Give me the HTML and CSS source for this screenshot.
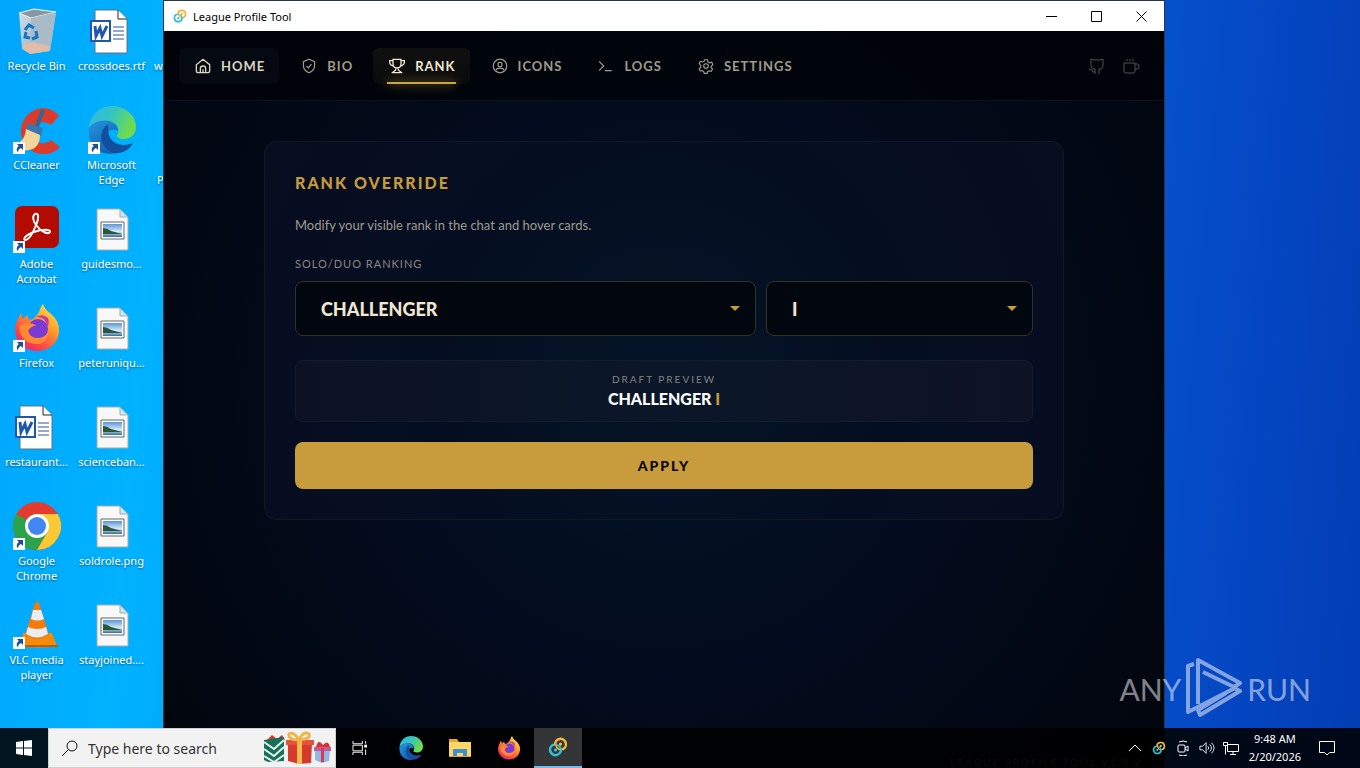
FILE: index.html
```
<!DOCTYPE html>
<html lang="en">
<head>
    <meta charset="UTF-8">
    <meta name="viewport" content="width=device-width, initial-scale=1.0">
    <title>League Profile Tool</title>
    <link rel="stylesheet" href="styles.css">
</head>
<body>
    <!-- shared icons -->
    <svg class="sprite" aria-hidden="true">
        <defs>
            <linearGradient id="edgeTop" x1="0" y1="0" x2="1" y2="0.4">
                <stop offset="0" stop-color="#2fb5e8"/>
                <stop offset="0.5" stop-color="#35c5c0"/>
                <stop offset="1" stop-color="#6fdb4a"/>
            </linearGradient>
            <linearGradient id="edgeLeft" x1="0" y1="0" x2="0.6" y2="1">
                <stop offset="0" stop-color="#2497dc"/>
                <stop offset="1" stop-color="#1160b5"/>
            </linearGradient>
            <linearGradient id="fire" x1="0.9" y1="0" x2="0.2" y2="1">
                <stop offset="0" stop-color="#fff04a"/>
                <stop offset="0.4" stop-color="#ff9a2b"/>
                <stop offset="0.75" stop-color="#ff4547"/>
                <stop offset="1" stop-color="#e8207c"/>
            </linearGradient>
            <linearGradient id="sky" x1="0" y1="0" x2="0" y2="1">
                <stop offset="0" stop-color="#5b94d8"/>
                <stop offset="0.6" stop-color="#d8ecf6"/>
                <stop offset="1" stop-color="#38699a"/>
            </linearGradient>
            <linearGradient id="bin" x1="0" y1="0" x2="1" y2="1">
                <stop offset="0" stop-color="#d5dfe6"/>
                <stop offset="1" stop-color="#8fa5b5"/>
            </linearGradient>
        </defs>
        <symbol id="i-shortcut" viewBox="0 0 12 12">
            <path d="M0 0h12v12H0z" fill="#fff"/>
            <path d="M4 2h6v6L8 6Q5 7 5 10.500Q2 7 5.800 4z" fill="#1d4f91"/>
        </symbol>
        <symbol id="i-edge" viewBox="0 0 48 48">
            <path d="M1 22C2 9 12 0 24 0c14 0 24 10 24 21 0 8-6 12-12 12-5 0-8-2-7-4 3-4 2-13-9-14C12 14 5 17 1 22z" fill="url(#edgeTop)"/>
            <path d="M1 22c4-6 12-9 20-7 7 2 9 7 9 10-5-3-13 0-13 8 0 7 7 12 12 14C12 51-1 39 1 22z" fill="url(#edgeLeft)"/>
            <path d="M20 18c-6 4-8 12-6 18 3 8 10 12 17 11 7-1 12-6 14-10-9 4-21 2-24-8-1-4-1-8-1-11z" fill="#124f9f"/>
        </symbol>
        <symbol id="i-firefox" viewBox="0 0 48 48">
            <path d="M2 27C2 20 5 14 8 9l2 6q2-3 5-4-1 3 2 5 5-1 9-8 2-6 4-8 2 6 7 9 10 8 9 19C45 39 36 47 24 47S3 38 2 27z" fill="url(#fire)"/>
            <circle cx="25" cy="25" r="10" fill="#7a3bd5"/>
            <path d="M6 22q9-5 17-1-6 2-8 6 2 7 9 7 8 0 11-6-1 13-13 12Q7 38 6 22z" fill="#ff8a30"/>
            <path d="M23 13q10-1 11 10 3-4 1-9-6-5-12-1z" fill="#c338a8"/>
        </symbol>
        <symbol id="i-doc" viewBox="0 0 48 48">
            <path d="M15 3h23l9 9v34H15z" fill="#fff" stroke="#62717c" stroke-width="1"/>
            <path d="M38 3v9h9" fill="#fff" stroke="#222" stroke-width="1"/>
            <path d="M33 20h11M33 24h11M33 28h11M33 32h11" stroke="#2b579a" stroke-width="1"/>
            <path d="M11 14h19v20H11z" fill="#fff" stroke="#1f56b0" stroke-width="2"/>
            <path d="M15 19l1 10 4-8 2 8 5-10" fill="none" stroke="#1f56b0" stroke-width="3"/>
        </symbol>
        <symbol id="i-image" viewBox="0 0 48 48">
            <path d="M9 4h23l8 8v33H9z" fill="#f8f8f8" stroke="#a5a9ac"/>
            <path d="M32 4v8h8z" fill="#c9e8f5" stroke="#a5a9ac"/>
            <path d="M13 17h23v17H13z" fill="#fff" stroke="#5a6673"/>
            <path d="M15 19h19v13H15z" fill="url(#sky)"/>
            <path d="M15 23q4 0 8 3l11 3H15z" fill="#28573e"/>
        </symbol>
        <symbol id="i-app" viewBox="0 0 24 24">
            <g fill="none" stroke-width="3" stroke-linecap="round">
                <path d="M8.500 9A6.500 6.500 0 1 1 18 14.500" stroke="#f7b63c"/>
                <path d="M15.500 15A6.500 6.500 0 1 1 6 9.500" stroke="#31c0d5"/>
                <path d="M9 8.500q1 5 5 6.500" stroke="#f7b63c" stroke-width="2"/>
                <path d="M10 9.500q5 1 5.500 5" stroke="#31c0d5" stroke-width="2"/>
            </g>
            <circle cx="15" cy="8.500" r="2" fill="#f7b63c"/>
            <circle cx="9" cy="15.500" r="2" fill="#31c0d5"/>
        </symbol>
    </svg>

    <main class="desktop">
        <ul class="shortcuts">
            <li>
                <svg viewBox="0 0 48 48">
                    <path d="M6 6l15-4 22 3-6 39-21 2-7-4z" fill="url(#bin)"/>
                    <path d="M6 6l15-4 22 3-25 6z" fill="#8798a3" stroke="#f2f6f8" stroke-width="1"/>
                    <path d="M18 11l25-6-6 39-20 3z" fill="#a9bbc7"/>
                    <path d="M10 39l9-4 18 4-1 5-19 3-7-5z" fill="#dfbda6"/>
                    <path d="M12 23l4-5 5 3M23 24l1 6-5 2M17 31l-5-1 1-5" fill="none" stroke="#0f76c8" stroke-width="3"/>
                </svg>
                <span>Recycle Bin</span>
            </li>
            <li>
                <svg viewBox="0 0 48 48">
                    <path d="M46 10l-8 9c-9-7-18 0-18 8 0 9 10 14 18 7l9 7C33 56 8 46 8 25 9 3 34-5 46 10z" fill="#dc3b2c"/>
                    <path d="M30 4l-7 19" stroke="#2d679c" stroke-width="4"/>
                    <path d="M15 17l15 5-2 8-15-5z" fill="#3877ad"/>
                    <path d="M13 23l14 6q0 10-7 14-11 4-19-3 12-6 12-17z" fill="#f3d59b"/>
                    <use href="#i-shortcut" y="36" width="12" height="12"/>
                </svg>
                <span>CCleaner</span>
            </li>
            <li>
                <svg viewBox="0 0 48 48">
                    <rect x="2" y="1" width="44" height="42" rx="7" fill="#b30b00"/>
                    <path d="M22 9c4-2 4 5 1 11-3 8-7 14-10 15-4 0-1-5 8-8 8-3 17-3 16 0s-9 0-14-7c-3-4-4-9-1-11z" fill="none" stroke="#fff" stroke-width="2"/>
                    <use href="#i-shortcut" y="36" width="12" height="12"/>
                </svg>
                <span>Adobe Acrobat</span>
            </li>
            <li>
                <svg viewBox="0 0 48 48"><use href="#i-firefox"/><use href="#i-shortcut" y="36" width="12" height="12"/></svg>
                <span>Firefox</span>
            </li>
            <li>
                <svg viewBox="8 0 48 48"><use href="#i-doc" width="48" height="48"/></svg>
                <span>restaurant...</span>
            </li>
            <li>
                <svg viewBox="0 0 48 48">
                    <circle cx="24" cy="24" r="24" fill="#e33b2e"/>
                    <path d="M3.200 12A24 24 0 0 0 24 48L34.400 30 24 24z" fill="#2ba24c"/>
                    <path d="M24 48A24 24 0 0 0 44.800 12H24v12l10.400 6z" fill="#fcc934"/>
                    <circle cx="24" cy="24" r="12" fill="#fff"/>
                    <circle cx="24" cy="24" r="9" fill="#4285f4"/>
                    <use href="#i-shortcut" y="36" width="12" height="12"/>
                </svg>
                <span>Google Chrome</span>
            </li>
            <li>
                <svg viewBox="0 0 48 48">
                    <path d="M10 32h29l5 13q-19 3-37 0z" fill="#f58b0a"/>
                    <path d="M22 2q2-2 4 0l10 32q-12 8-24 0z" fill="#f47b0b"/>
                    <path d="M20 9h8l3 9q-7 3-13 0zM15 26q9 4 18 0l2 7q-11 7-22 0z" fill="#e9edf0"/>
                    <path d="M6 45h39" stroke="#c55800" stroke-width="2"/>
                    <use href="#i-shortcut" y="36" width="12" height="12"/>
                </svg>
                <span>VLC media player</span>
            </li>
            <li>
                <svg viewBox="8 0 48 48"><use href="#i-doc" width="48" height="48"/></svg>
                <span>crossdoes.rtf</span>
            </li>
            <li>
                <svg viewBox="0 0 48 48"><use href="#i-edge"/><use href="#i-shortcut" y="36" width="12" height="12"/></svg>
                <span>Microsoft Edge</span>
            </li>
            <li><svg viewBox="0 0 48 48"><use href="#i-image" width="48" height="48"/></svg><span>guidesmo...</span></li>
            <li><svg viewBox="0 0 48 48"><use href="#i-image" width="48" height="48"/></svg><span>peteruniqu...</span></li>
            <li><svg viewBox="0 0 48 48"><use href="#i-image" width="48" height="48"/></svg><span>scienceban...</span></li>
            <li><svg viewBox="0 0 48 48"><use href="#i-image" width="48" height="48"/></svg><span>soldrole.png</span></li>
            <li><svg viewBox="0 0 48 48"><use href="#i-image" width="48" height="48"/></svg><span>stayjoined....</span></li>
            <li class="behind"><span>w</span></li>
            <li class="behind second"><span>P</span></li>
        </ul>

        <section class="window">
            <div class="titlebar">
                <svg class="app-icon"><use href="#i-app"/></svg>
                <span class="caption">League Profile Tool</span>
                <button aria-label="Minimize"><svg viewBox="0 0 11 11"><path d="M0 5.500h11"/></svg></button>
                <button aria-label="Maximize"><svg viewBox="0 0 11 11"><path d="M.5.500h10v10H.500z"/></svg></button>
                <button aria-label="Close"><svg viewBox="0 0 11 11"><path d="M.5.500l10 10M10.500.500l-10 10"/></svg></button>
            </div>

            <header class="topbar">
                <nav>
                    <button class="tab hover">
                        <svg viewBox="0 0 24 24"><path d="M2 10l10-8 10 8v9q0 3-3 3H5q-3 0-3-3zM8 22v-6q0-4 4-4t4 4v6M12 22v-5"/></svg>
                        Home
                    </button>
                    <button class="tab">
                        <svg viewBox="-1 -1 26 26"><path d="M12 1l9 4v7c0 6-4 9-9 11-5-2-9-5-9-11V5zM8 12l3 3 5-6"/></svg>
                        Bio
                    </button>
                    <button class="tab active">
                        <svg viewBox="0 0 24 24"><path d="M6 2h12v7c0 8-12 8-12 0zM6 4H1v2q0 5 6 6M18 4h5v2q0 5-6 6M10 15v3l-5 4M14 15v3l5 4M4 22h16"/></svg>
                        Rank
                    </button>
                    <button class="tab">
                        <svg viewBox="-1 -1 26 26"><circle cx="12" cy="12" r="11"/><rect x="9" y="6" width="6" height="7" rx="2"/><path d="M6 19q0-3 3-3h6q3 0 3 3"/></svg>
                        Icons
                    </button>
                    <button class="tab">
                        <svg viewBox="-1 -1 28 28"><path d="M1 5l8 8-8 8M11 21h12"/></svg>
                        Logs
                    </button>
                    <button class="tab">
                        <svg viewBox="-2 -2 28 28"><path d="M9.500 1h5l1 4 3 1.500 3.500-1 2 4-3 3v2l2.500 3-2.500 4-3.500-1-2.500 1.500-1 3h-5l-1-3L5 20l-3 1-2-4 3-3v-3L0 8l2-4 4 1 2.500-1z"/><circle cx="12" cy="12" r="4"/></svg>
                        Settings
                    </button>
                </nav>
                <div class="links">
                    <a href="#" aria-label="GitHub">
                        <svg viewBox="0 0 16 16"><path d="M6 16v-5H4Q2 10 2 7V1l3 1h6l3-1v6q0 3-2 4h-2v5M0 11l3 1 1 2h2"/></svg>
                    </a>
                    <a href="#" aria-label="Buy me a coffee">
                        <svg viewBox="0 0 16 16"><path d="M1 5h11v8q0 2-2 2H3q-2 0-2-2zM12 6h2q2 0 2 2v1q0 2-2 2h-2M4 1v2M7 1v2M10 1v2"/></svg>
                    </a>
                </div>
            </header>

            <div class="content">
                <form class="card">
                    <h1>Rank Override</h1>
                    <p>Modify your visible rank in the chat and hover cards.</p>
                    <label class="field-label" for="tier">Solo/Duo Ranking</label>
                    <div class="selects">
                        <div class="select">
                            <select id="tier"><option>CHALLENGER</option></select>
                        </div>
                        <div class="select">
                            <select id="division" aria-label="Division"><option>I</option></select>
                        </div>
                    </div>
                    <div class="preview">
                        <small>Draft Preview</small>
                        <strong>CHALLENGER <em>I</em></strong>
                    </div>
                    <button type="button" class="apply">Apply</button>
                </form>
            </div>
            <footer>League Profile Tool v1.0.2</footer>
        </section>

        <div class="watermark">
            <span>ANY</span>
            <svg viewBox="0 0 56 64"><path d="M8 7L2 9v46l47-24M12 47V3l42 23-6 4-31-15M48 31l6 3-40 24-2-5 28-17"/></svg>
            <span>RUN</span>
        </div>
    </main>

    <div class="taskbar">
        <button class="start" aria-label="Start">
            <svg viewBox="0 0 16 16"><path d="M0 2l7-1v6.500H0zM8 1l8-1v7.500H8zM0 8.500h7V15l-7-1zM8 8.500h8V16l-8-1z" fill="#fff"/></svg>
        </button>
        <label class="search">
            <svg class="lens" viewBox="0 0 17 17"><circle cx="11" cy="6" r="5"/><path d="M7.500 9.500L1 16"/></svg>
            <input type="text" placeholder="Type here to search" aria-label="Search">
            <svg class="gifts" viewBox="0 0 68 34">
                <path d="M4 9l5-5 5 4 5-4 3 5z" fill="#d6342c"/>
                <path d="M1 9l20-3v24l-16 1-4-2z" fill="#16705a"/>
                <path d="M1 11l10 7 10-9M1 18l10 7 10-9M1 25l10 6 10-7" fill="none" stroke="#e7f2ec" stroke-width="2"/>
                <path d="M25 12h24l-1 20-12 1-11-3z" fill="#d53b2d"/>
                <path d="M23 9h28v5H23z" fill="#e6503d"/>
                <path d="M34 10h5v23h-5z" fill="#f3bd4d"/>
                <path d="M36 9Q25 9 26 3q5-3 10 6 5-10 10-6 2 5-10 6" fill="none" stroke="#efb54b" stroke-width="3"/>
                <path d="M52 18h15l-1 12-7 2-7-3z" fill="#91b8de"/>
                <path d="M51 16h17v4H51z" fill="#c65a98"/>
                <path d="M58 17h3v14h-3z" fill="#d13c5c"/>
                <path d="M53 16q2-9 7-2 5-6 7 2z" fill="#d2362f"/>
            </svg>
        </label>
        <button class="task-view" aria-label="Task view">
            <svg class="line" viewBox="0 0 17 17"><path d="M1 1v3h10V1M1 5.500v6h10v-6zM1 16v-3h10v3M14.500 1v3M14.500 10v6"/><path d="M13 5h3v3h-3z" fill="#fff" stroke="none"/></svg>
        </button>
        <button class="pinned" aria-label="Microsoft Edge"><svg><use href="#i-edge"/></svg></button>
        <button class="pinned" aria-label="File Explorer">
            <svg viewBox="0 0 24 24">
                <path d="M1 3h8l2 3h12v15H1z" fill="#e5a923"/>
                <path d="M1 6h22v14H1z" fill="#fcd667"/>
                <path d="M5 13h14v7h-4v-3H9v3H5z" fill="#3d8fd0"/>
            </svg>
        </button>
        <button class="pinned" aria-label="Firefox"><svg><use href="#i-firefox"/></svg></button>
        <button class="running" aria-label="League Profile Tool"><svg><use href="#i-app"/></svg></button>

        <div class="tray">
            <svg class="line" viewBox="0 0 16 16"><path d="M2 11l6-6 6 6"/></svg>
            <svg viewBox="-2 -2 28 28"><use href="#i-app" width="24" height="24"/></svg>
            <svg class="line" viewBox="0 0 16 16"><rect x="3" y="5" width="7" height="7" rx="1"/><path d="M10 8l3-2v5l-3-2M4 2q4-2 8 0M4 15q4 2 8 0"/></svg>
            <svg class="line" viewBox="0 0 18 16"><path d="M1 6h3l4-4v12l-4-4H1zM10 6q2 2 0 4M12 4q4 4 0 8M14 2q6 6 0 12"/></svg>
            <svg class="line" viewBox="0 0 16 16"><path d="M4.500 4.500h11v7h-11zM7 14.500h6M10 12v3M.5 2.500h4v3h-4zM2.500 6v8.500"/></svg>
            <div class="clock"><time>9:48 AM</time><time>2/20/2026</time></div>
            <svg class="line" viewBox="0 0 16 16"><path d="M.5 1.500h15v11h-5L8 15l-2.500-2.500h-5z"/></svg>
        </div>
    </div>
</body>
</html>
```
FILE: styles.css
```
* {
    box-sizing: border-box;
    margin: 0;
    padding: 0;
}

body {
    height: 100vh;
    overflow: hidden;
    position: relative;
    font-family: "Noto Sans", "Open Sans", sans-serif;
    font-size: 11px;
    color: #fff;
}

button {
    border: none;
    background: none;
    color: inherit;
    font: inherit;
}

svg {
    display: block;
    flex-shrink: 0;
}

.sprite {
    position: absolute;
    width: 0;
    height: 0;
}

/* desktop */
.desktop {
    position: relative;
    height: 100%;
    overflow: hidden;
    background: linear-gradient(95deg, #00a6fc 0%, #00b2ff 12%, #054bc8 86%, #033db4 100%);
}

.shortcuts {
    display: grid;
    grid-template-rows: repeat(7, 99px);
    grid-auto-columns: 75px;
    grid-auto-flow: column;
    margin-left: -1px;
    padding-top: 7px;
    list-style: none;
}

.shortcuts li {
    display: flex;
    flex-direction: column;
    align-items: center;
    gap: 3px;
    text-align: center;
    line-height: 15px;
    text-shadow: 0 1px 2px rgba(0, 0, 0, 0.5);
}

.shortcuts svg {
    width: 48px;
    height: 48px;
}

.shortcuts .behind {
    align-items: flex-start;
    padding: 51px 5px 0;
}

.shortcuts .second {
    padding: 66px 8px 0;
}

/* app window */
.window {
    position: absolute;
    top: 0;
    right: 195px;
    bottom: 0;
    left: 163px;
    display: flex;
    flex-direction: column;
    border: 1px solid #27364d;
    border-bottom: none;
    background: radial-gradient(circle at 50% 50%, #041427 0%, #030c1e 45%, #020711 85%, #01050d 100%);
    color: #a09b8c;
    font-family: Lato, sans-serif;
}

.titlebar {
    display: flex;
    align-items: center;
    height: 30px;
    padding-left: 9px;
    background: #fff;
    color: #000;
    font-family: "Noto Sans", "Open Sans", sans-serif;
}

.app-icon {
    width: 14px;
    height: 14px;
    margin-right: 6px;
}

.caption {
    flex: 1;
}

.titlebar button {
    display: flex;
    align-items: center;
    justify-content: center;
    width: 45px;
    height: 30px;
}

.titlebar button svg {
    width: 11px;
    height: 11px;
    fill: none;
    stroke: #000;
}

.topbar {
    display: flex;
    align-items: center;
    justify-content: space-between;
    height: 70px;
    padding: 0 25px 0 15px;
    background: rgba(0, 2, 8, 0.8);
    border-bottom: 1px solid #0a131d;
}

.topbar nav {
    display: flex;
    gap: 6px;
}

.tab {
    position: relative;
    display: flex;
    align-items: center;
    gap: 10px;
    height: 36px;
    padding: 0 14px 0 16px;
    border-radius: 6px;
    font-size: 13px;
    font-weight: 700;
    letter-spacing: 1px;
    text-transform: uppercase;
}

.tab svg {
    width: 16px;
    height: 16px;
    fill: none;
    stroke: currentColor;
    stroke-width: 2;
}

.tab.hover {
    background: #050a12;
    color: #dcd5c0;
}

.tab.active {
    background: linear-gradient(#11110f, #080a0c);
    color: #f0e6d2;
}

.tab.active::after {
    content: "";
    position: absolute;
    right: 14px;
    bottom: 0;
    left: 14px;
    height: 2px;
    background: #c8aa3c;
    box-shadow: 0 0 10px #c89b3c;
}

.links {
    display: flex;
    gap: 18px;
}

.links a {
    color: #505254;
}

.links svg {
    width: 16px;
    height: 16px;
    fill: none;
    stroke: currentColor;
    overflow: visible;
}

.content {
    flex: 1;
    padding: 40px 100px 0;
}

.card {
    max-width: 800px;
    margin: 0 auto;
    padding: 30px;
    border: 1px solid #111824;
    border-radius: 12px;
    background: radial-gradient(circle at 50% 60%, #041426 0%, #050e21 50%, #080d20 100%);
}

.card h1 {
    color: #c89b3c;
    font-size: 16px;
    font-weight: 900;
    line-height: 22px;
    letter-spacing: 2px;
    text-transform: uppercase;
}

.card p {
    margin: 20px 0;
    font-size: 13px;
    line-height: 22px;
}

.field-label {
    display: block;
    margin-bottom: 9px;
    font-size: 11px;
    line-height: 16px;
    letter-spacing: 1px;
    text-transform: uppercase;
    color: #8a8780;
}

.selects {
    display: grid;
    grid-template-columns: 19fr 11fr;
    gap: 10px;
}

.select {
    position: relative;
}

.select::after {
    content: "";
    position: absolute;
    top: 25px;
    right: 16px;
    border: 5px solid transparent;
    border-top-color: #c89b3c;
    border-bottom: none;
}

.select select {
    appearance: none;
    width: 100%;
    height: 55px;
    padding: 0 25px;
    border: 1px solid #303522;
    border-radius: 8px;
    background: #01060f;
    color: #f0e6d2;
    font: 900 18px Lato, sans-serif;
}

.preview {
    display: flex;
    flex-direction: column;
    align-items: center;
    margin: 24px 0 20px;
    padding: 10px;
    border: 1px solid #141d2c;
    border-radius: 8px;
    background: linear-gradient(90deg, #0c1224, #0a1728, #0e1225);
}

.preview small {
    font-size: 10px;
    line-height: 16px;
    letter-spacing: 2px;
    text-transform: uppercase;
    color: #85837e;
}

.preview strong {
    color: #fff;
    font-size: 16px;
    font-weight: 900;
    line-height: 24px;
}

.preview em {
    color: #c89b3c;
    font-style: normal;
}

.apply {
    display: block;
    width: 100%;
    height: 47px;
    border-radius: 8px;
    background: #c89b3c;
    color: #050505;
    font-size: 14px;
    font-weight: 900;
    letter-spacing: 2px;
    text-transform: uppercase;
}

.window footer {
    padding: 0 22px;
    color: #605c54;
    font-size: 10px;
    line-height: 12px;
    letter-spacing: 2px;
    text-align: right;
    text-transform: uppercase;
}

.watermark {
    position: absolute;
    right: 49px;
    bottom: 47px;
    display: flex;
    align-items: center;
    gap: 5px;
    opacity: 0.5;
    font: 30px Lato, sans-serif;
}

.watermark svg {
    width: 56px;
    height: 64px;
    fill: none;
    stroke: #fff;
    stroke-width: 4;
    stroke-linejoin: round;
}

/* taskbar */
.taskbar {
    position: absolute;
    right: 0;
    bottom: 0;
    left: 0;
    display: flex;
    height: 40px;
    background: rgba(0, 0, 0, 0.88);
}

.taskbar button {
    display: flex;
    align-items: center;
    justify-content: center;
    width: 48px;
}

.taskbar .start svg {
    width: 16px;
    height: 16px;
}

.line {
    width: 16px;
    height: 16px;
    fill: none;
    stroke: #fff;
}

.search {
    display: flex;
    align-items: center;
    width: 288px;
    padding: 0 4px 0 12px;
    border: 1px solid #d0d0d0;
    background: #f2f2f2;
}

.lens {
    width: 17px;
    height: 17px;
    fill: none;
    stroke: #111;
}

.search input {
    flex: 1;
    min-width: 0;
    padding-left: 10px;
    border: none;
    outline: none;
    background: none;
    font: 14px "Noto Sans", "Open Sans", sans-serif;
}

.search input::placeholder {
    color: #333;
}

.gifts {
    width: 68px;
    height: 34px;
}

.taskbar .task-view {
    margin-right: 2px;
}

.taskbar .pinned {
    width: 49px;
}

.pinned svg {
    width: 24px;
    height: 24px;
}

.taskbar .running {
    margin-left: 1px;
    border-bottom: 2px solid #76b9ed;
    background: #333537;
}

.running svg {
    width: 20px;
    height: 20px;
}

.tray {
    display: flex;
    align-items: center;
    gap: 8px;
    margin-left: auto;
    padding-right: 25px;
}

.tray svg {
    width: 16px;
    height: 16px;
}

.clock {
    margin: 0 10px 0 2px;
    line-height: 18px;
    text-align: center;
}

.clock time {
    display: block;
}
```
